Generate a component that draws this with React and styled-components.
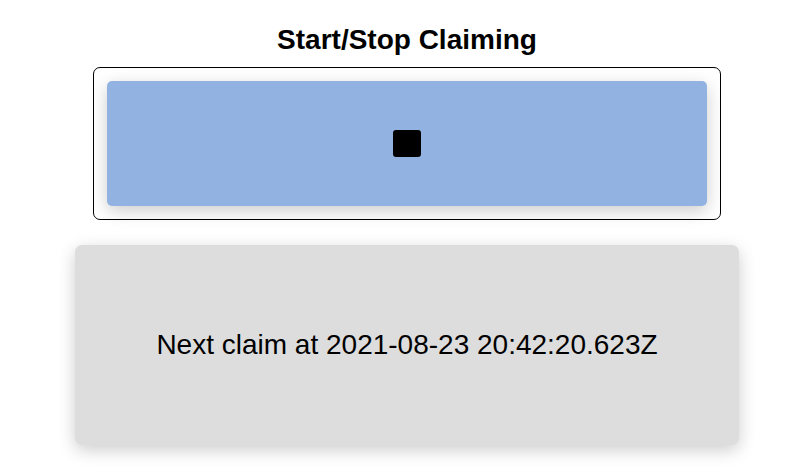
import React from "react";
import styled, { createGlobalStyle } from "styled-components";

const GlobalStyle = createGlobalStyle`
  *, *::before, *::after { box-sizing: border-box; }
  body {
    margin: 0;
    background: #fff;
    color: #000;
    font-family: "Liberation Sans", Arial, sans-serif;
    font-size: 28px;
    line-height: 32px;
  }
`;

const Page = styled.main`
  display: flex;
  flex-direction: column;
  gap: 25px;
  padding: 24px 72px 30px 75px;
`;

const Controls = styled.section`
  display: flex;
  flex-direction: column;
  gap: 11px;
  padding: 0 18px;
`;

const Title = styled.h1`
  margin: 0;
  font-size: 28px;
  line-height: 32px;
  text-align: center;
`;

const Frame = styled.div`
  display: flex;
  padding: 13px;
  border: 1px solid #000;
  border-radius: 7px;
`;

const ToggleButton = styled.button`
  display: flex;
  flex: 1;
  align-items: center;
  justify-content: center;
  padding: 49px 0;
  border: 0;
  border-radius: 5px;
  background: #92b3e2;
  box-shadow: 0 5px 17px rgba(0, 0, 0, 0.2);
  cursor: pointer;
`;

const StopIcon = styled.svg`
  display: block;
  width: 28px;
  height: 27px;
`;

const StatusCard = styled.section`
  padding: 84px 24px;
  border-radius: 7px;
  background: #ddd;
  box-shadow: 0 5px 17px rgba(0, 0, 0, 0.2);
  text-align: center;
`;

const StatusText = styled.p`
  margin: 0;
`;

export default function App() {
  return (
    <>
      <GlobalStyle />
      <Page>
        <Controls>
          <Title>Start/Stop Claiming</Title>
          <Frame>
            <ToggleButton type="button" aria-label="Stop claiming">
              <StopIcon viewBox="0 0 28 27" aria-hidden="true">
                <rect width="28" height="27" rx="3" />
              </StopIcon>
            </ToggleButton>
          </Frame>
        </Controls>
        <StatusCard>
          <StatusText>Next claim at 2021-08-23 20:42:20.623Z</StatusText>
        </StatusCard>
      </Page>
    </>
  );
}
